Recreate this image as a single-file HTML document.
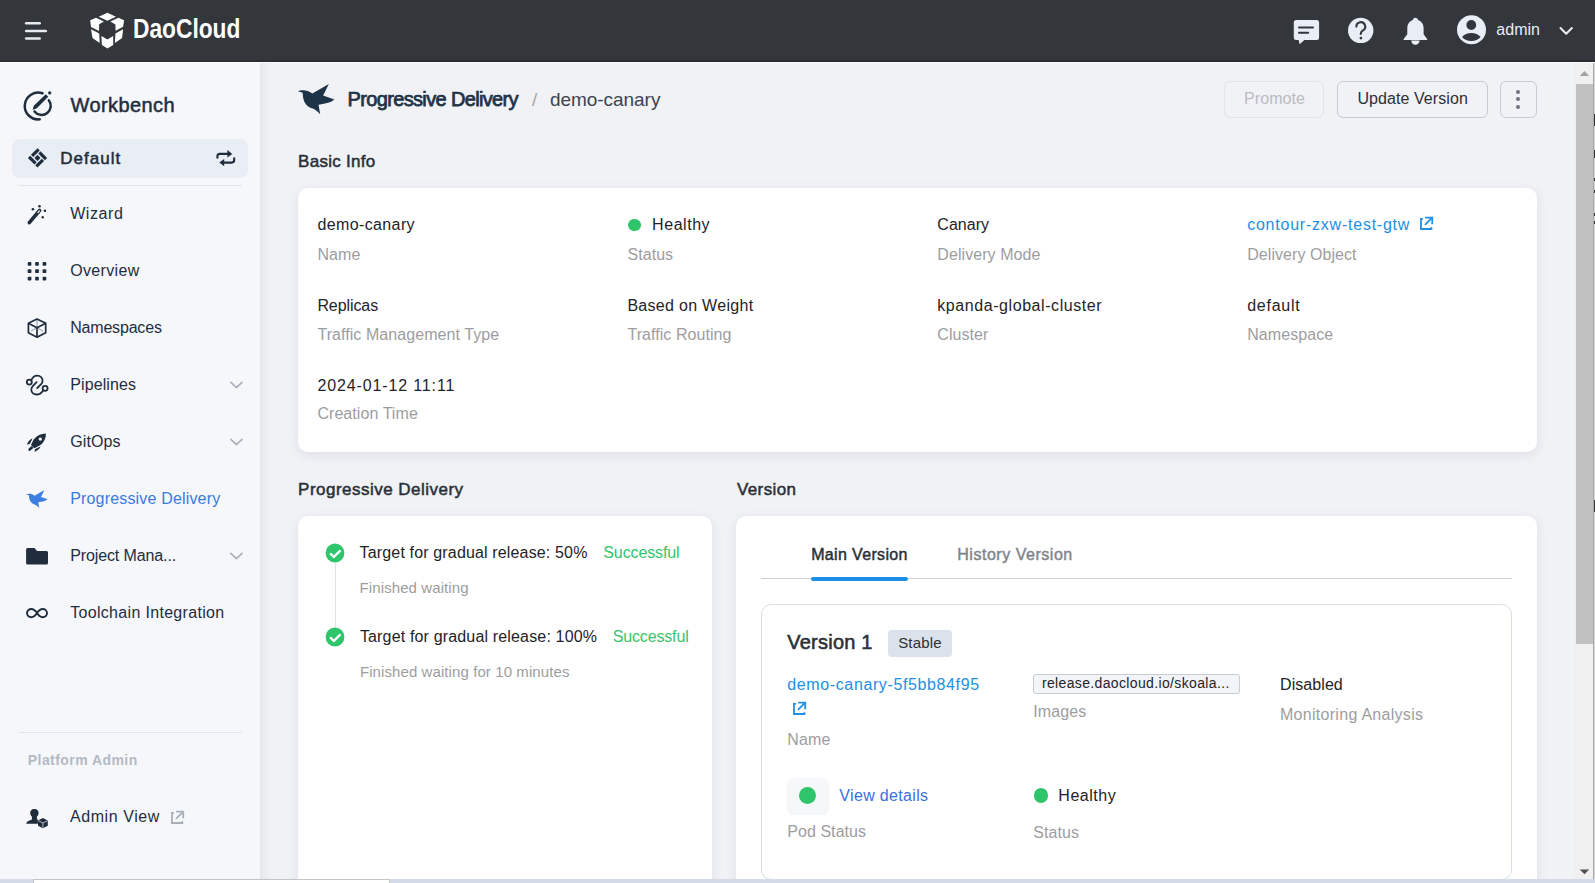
<!DOCTYPE html>
<html><head><meta charset="utf-8"><title>DaoCloud - Progressive Delivery</title>
<style>
html,body{margin:0;padding:0;}
body{width:1595px;height:883px;overflow:hidden;position:relative;background:#f1f2f6;font-family:"Liberation Sans",sans-serif;}
.t{position:absolute;white-space:nowrap;}
.b{position:absolute;}
svg.b{overflow:visible;}
</style></head><body>
<div class="b" style="left:0px;top:0px;width:1595px;height:62px;background:#33363b;"></div>
<div class="b" style="left:0px;top:60px;width:1595px;height:2px;background:linear-gradient(#2f3237,#25282c);"></div>
<div class="b" style="left:0px;top:62px;width:1595px;height:1px;background:#fdfdfe;"></div>
<div class="b" style="left:0px;top:63px;width:260px;height:820px;background:#f6f7fb;"></div>
<div class="b" style="left:260px;top:63px;width:1335px;height:820px;background:#f1f2f6;"></div>
<div class="b" style="left:260px;top:63px;width:12px;height:820px;background:linear-gradient(90deg,rgba(0,0,0,0.045),rgba(0,0,0,0));"></div>
<svg class="b" style="left:20px;top:15px;" width="32" height="32" viewBox="0 0 32 32"><g stroke="#e6ebf3" stroke-width="2.6" stroke-linecap="round"><line x1="6.2" y1="8.3" x2="19.7" y2="8.3"/><line x1="6.2" y1="16" x2="25.8" y2="16"/><line x1="6.2" y1="23.5" x2="19.7" y2="23.5"/></g></svg>
<svg class="b" style="left:86px;top:8px;" width="44" height="44" viewBox="0 0 44 44"><g fill="#ffffff"><polygon points="21.4,4.7 29.9,8.7 21.4,12.7 12.7,8.7"/><polygon points="4.2,12.2 10,9.7 17.9,13.5 13.2,16.2 13,22.9 5,18.9"/><polygon points="38.1,12.2 32.4,9.7 24.4,13.5 29.4,16.4 29.6,22.7 37.1,18.7"/><polygon points="5,21.2 13.2,25.4 13.7,34.9 6.5,29.9"/><polygon points="37.1,21.2 29.4,25.4 28.9,34.9 36.1,29.9"/><polygon points="15.4,27.9 21.4,31.6 27.2,27.9 27.2,36.9 21.4,40.6 15.9,37.1"/></g></svg>
<div class="t" style="left:132.60px;top:15.52px;font-size:27px;line-height:27px;color:#ffffff;font-weight:bold;transform:scaleX(0.8424);transform-origin:0.00px 0;">DaoCloud</div>
<svg class="b" style="left:1288px;top:14px;" width="36" height="36" viewBox="0 0 36 36"><path fill="#e8edf6" d="M8.3,6.1 H28.6 A2.5,2.5 0 0 1 31.1,8.6 V23.5 A2.5,2.5 0 0 1 28.6,26 H16.4 L11.6,30.2 L10.6,26 H8.3 A2.5,2.5 0 0 1 5.8,23.5 V8.6 A2.5,2.5 0 0 1 8.3,6.1 Z"/><g stroke="#33363b" stroke-width="2" stroke-linecap="round"><line x1="11" y1="13.6" x2="25" y2="13.6"/><line x1="11" y1="18.7" x2="20.2" y2="18.7"/></g></svg>
<svg class="b" style="left:1344px;top:14px;" width="34" height="34" viewBox="0 0 34 34"><circle cx="16.7" cy="16.4" r="12.7" fill="#e8edf6"/><path d="M12.4,12.6 a4.4,4.4 0 1 1 6.6,3.8 c-1.5,0.9 -2.3,1.7 -2.3,3.6" fill="none" stroke="#33363c" stroke-width="2.1" stroke-linecap="round"/><circle cx="16.9" cy="24.1" r="1.4" fill="#33363c"/></svg>
<svg class="b" style="left:1398px;top:14px;" width="34" height="34" viewBox="0 0 34 34"><path fill="#e8edf6" d="M17.4,3.8 c1.3,0 2.3,0.9 2.6,2.1 c3.4,1.1 5.6,4.2 5.6,8 v6.4 l3.5,4.6 c0.4,0.6 0,1.2 -0.6,1.2 h-22.2 c-0.7,0 -1,-0.7 -0.6,-1.2 l3.6,-4.6 v-6.4 c0,-3.8 2.3,-6.9 5.5,-8 c0.3,-1.2 1.3,-2.1 2.6,-2.1z"/><path fill="#e8edf6" d="M13.2,26.6 h8.4 a4.2,4.2 0 0 1 -8.4,0z"/></svg>
<svg class="b" style="left:1452px;top:10px;" width="40" height="40" viewBox="0 0 40 40"><circle cx="19.5" cy="19.8" r="14.5" fill="#e8edf6"/><circle cx="19.3" cy="15" r="4.9" fill="#33363c"/><path d="M10,27 c2.2,-2.8 5.5,-4.1 9.3,-4.1 c3.8,0 7.1,1.3 9.3,4.1 c-2.2,2.7 -5.5,4 -9.3,4 c-3.8,0 -7.1,-1.3 -9.3,-4z" fill="#33363c"/></svg>
<div class="t" style="left:1496.30px;top:21.52px;font-size:16px;line-height:16px;color:#e8edf6;letter-spacing:0.030px;">admin</div>
<svg class="b" style="left:1556px;top:24px;" width="20" height="14" viewBox="0 0 20 14"><path d="M4.5,4 L10.2,9.8 L15.9,4" fill="none" stroke="#e8edf6" stroke-width="2" stroke-linecap="round" stroke-linejoin="round"/></svg>
<svg class="b" style="left:18px;top:86px;" width="40" height="40" viewBox="0 0 40 40"><g fill="none" stroke="#1f2d3d" stroke-width="2.5" stroke-linecap="round"><path d="M24.5,7.3 A13.4,13.4 0 1 0 21.7,33.3"/><path d="M30.8,14.2 A8.8,8.8 0 1 1 16.5,25.4"/></g><path d="M14.6,23.8 L15.8,19.8 L27.8,8.3 L30.2,10.7 L18.6,22.4 Z" fill="#1f2d3d"/><circle cx="31.7" cy="6.9" r="1.6" fill="#1f2d3d"/></svg>
<div class="t" style="left:70.60px;top:95.02px;font-size:20px;line-height:20px;color:#1f2d3d;-webkit-text-stroke:0.5px #1f2d3d;letter-spacing:0.401px;">Workbench</div>
<div class="b" style="left:12px;top:139px;width:236px;height:39px;background:#e9eef5;border-radius:8px;"></div>
<svg class="b" style="left:22px;top:143px;" width="30" height="30" viewBox="0 0 30 30"><g transform="rotate(45 15.5 14.9)" fill="#1f2d3d"><rect x="8.70" y="8.10" width="3.20" height="9.30"/><rect x="13.00" y="8.10" width="9.30" height="3.20"/><rect x="19.10" y="12.40" width="3.20" height="9.30"/><rect x="8.70" y="18.50" width="9.30" height="3.20"/><rect x="13.30" y="12.70" width="4.40" height="4.40"/></g></svg>
<div class="t" style="left:60.30px;top:150.02px;font-size:17px;line-height:17px;color:#1f2d3d;-webkit-text-stroke:0.5px #1f2d3d;letter-spacing:1.023px;">Default</div>
<svg class="b" style="left:210px;top:143px;" width="30" height="30" viewBox="0 0 30 30"><g fill="none" stroke="#1f2d3d" stroke-width="2.1" stroke-linecap="round"><path d="M7.4,14.8 v-1.4 a2.5,2.5 0 0 1 2.5,-2.5 h10"/><path d="M24.2,15.3 v1.8 a2.5,2.5 0 0 1 -2.5,2.5 h-10"/></g><path d="M17.4,7 L22.3,10.9 L17.4,14.6 Z" fill="#1f2d3d"/><path d="M14.2,15.9 L9.3,19.6 L14.2,23.3 Z" fill="#1f2d3d"/></svg>
<div class="b" style="left:19px;top:185px;width:223px;height:1px;background:#e1e4ea;"></div>
<svg class="b" style="left:22px;top:200px;" width="30" height="30" viewBox="0 0 30 30"><line x1="7.3" y1="22.6" x2="16.3" y2="12" stroke="#1f2d3d" stroke-width="3.6" stroke-linecap="round"/><line x1="16.6" y1="11.6" x2="17.6" y2="10.5" stroke="#1f2d3d" stroke-width="3.6" stroke-linecap="round"/><line x1="15.9" y1="12.6" x2="17.4" y2="10.9" stroke="#f6f7fb" stroke-width="1.3" stroke-linecap="round"/><g fill="#1f2d3d"><circle cx="10.9" cy="9.2" r="1.3"/><circle cx="17.5" cy="6.3" r="1.3"/><circle cx="22.9" cy="10.7" r="1.3"/><circle cx="20.7" cy="17.3" r="1.2"/></g></svg>
<svg class="b" style="left:0;top:0" width="60" height="300" viewBox="0 0 60 300"><g fill="#1f2d3d"><rect x="27.70" y="262.00" width="3.7" height="3.7" rx="0.9"/><rect x="27.70" y="269.35" width="3.7" height="3.7" rx="0.9"/><rect x="27.70" y="276.70" width="3.7" height="3.7" rx="0.9"/><rect x="35.15" y="262.00" width="3.7" height="3.7" rx="0.9"/><rect x="35.15" y="269.35" width="3.7" height="3.7" rx="0.9"/><rect x="35.15" y="276.70" width="3.7" height="3.7" rx="0.9"/><rect x="42.60" y="262.00" width="3.7" height="3.7" rx="0.9"/><rect x="42.60" y="269.35" width="3.7" height="3.7" rx="0.9"/><rect x="42.60" y="276.70" width="3.7" height="3.7" rx="0.9"/></g></svg>
<svg class="b" style="left:22px;top:313px;" width="30" height="30" viewBox="0 0 30 30"><g fill="none" stroke="#1f2d3d" stroke-width="1.7" stroke-linejoin="round"><path d="M15,5.9 L23.7,10.3 V19.7 L15,24.2 L6.4,19.7 V10.3 Z"/><path d="M6.4,10.3 L15,14.8 L23.7,10.3 M15,14.8 V24.2"/></g><g stroke="#1f2d3d" stroke-width="0.8" opacity="0.6"><path d="M15,6.5 V14.5 M15,14.8 L9,18 M15,14.8 L21,18"/></g></svg>
<svg class="b" style="left:22px;top:370px;" width="30" height="30" viewBox="0 0 30 30"><g fill="none" stroke="#1f2d3d" stroke-width="1.8" stroke-linecap="round"><circle cx="7.3" cy="12.1" r="2.5"/><circle cx="23.1" cy="18.3" r="2.5"/><path d="M9.3,10.2 C10.5,7.2 12.6,5.6 15.3,5.6 C18.4,5.6 20.6,8 20.6,10.7 C20.6,12.3 19.9,13.4 18.9,14.4 L15.3,18"/><path d="M14.6,12.2 L11,15.8 C10,16.8 9.3,18 9.3,19.6 C9.3,22.4 11.6,24.5 14.6,24.5 C17,24.5 19.4,23.1 21.2,20.4"/></g></svg>
<svg class="b" style="left:22px;top:427px;" width="30" height="30" viewBox="0 0 30 30"><path fill="#1f2d3d" d="M23.9,6.4 C24,11.2 21.8,15.6 17.6,18.6 L12.4,21.2 L9,17.9 L11.6,12.6 C14.6,8.5 19,6.4 23.9,6.4 Z"/><circle cx="18.3" cy="12.1" r="1.7" fill="#f6f7fb"/><path fill="#1f2d3d" d="M10.4,11.3 C8.2,12.2 6.2,14.4 4.9,17.4 L7.7,17 L9.6,13.6 Z M18.6,19.5 C17.6,21.8 15.5,23.6 12.6,25 L13,22.3 L16.2,20.4 Z"/><path d="M9.9,20.6 L7.6,22.6" stroke="#1f2d3d" stroke-width="2.6" stroke-linecap="round"/></svg>
<svg class="b" style="left:22px;top:484px;" width="30" height="30" viewBox="0 0 30 30"><path fill="#3d7fe0" d="M4.1,10.4 C6,9.6 9.5,9.3 12.6,11.7 L22.4,6.1 L19,12.9 L25.7,15.3 C23.5,17 21,17.8 16.3,18.3 L17.3,24.1 C16,22.5 14.8,21.5 12.5,20.5 C9.5,19.4 7.6,17.5 7.1,13.6 L6.9,11.2 Z"/></svg>
<svg class="b" style="left:22px;top:540px;" width="30" height="30" viewBox="0 0 30 30"><path fill="#1f2d3d" d="M5.6,8 h6.9 l2.5,3 h9.5 a1.5,1.5 0 0 1 1.5,1.5 v10.5 a1.5,1.5 0 0 1 -1.5,1.5 h-18.9 a1.5,1.5 0 0 1 -1.5,-1.5 v-13.5 a1.5,1.5 0 0 1 1.5,-1.5z"/></svg>
<svg class="b" style="left:22px;top:598px;" width="30" height="30" viewBox="0 0 30 30"><path fill="none" stroke="#1f2d3d" stroke-width="1.9" d="M15,15.1 C13.3,12.4 11.4,11 9.3,11 C6.9,11 5,12.8 5,15.1 C5,17.4 6.9,19.2 9.3,19.2 C11.4,19.2 13.3,17.8 15,15.1 C16.7,12.4 18.6,11 20.7,11 C23.1,11 25,12.8 25,15.1 C25,17.4 23.1,19.2 20.7,19.2 C18.6,19.2 16.7,17.8 15,15.1 Z"/></svg>
<svg class="b" style="left:226px;top:378px;" width="20" height="14" viewBox="0 0 20 14"><path d="M4.8,4.3 L10.4,9.6 L16,4.3" fill="none" stroke="#a9b0bb" stroke-width="1.6" stroke-linecap="round" stroke-linejoin="round"/></svg>
<svg class="b" style="left:226px;top:435px;" width="20" height="14" viewBox="0 0 20 14"><path d="M4.8,4.3 L10.4,9.6 L16,4.3" fill="none" stroke="#a9b0bb" stroke-width="1.6" stroke-linecap="round" stroke-linejoin="round"/></svg>
<svg class="b" style="left:226px;top:549px;" width="20" height="14" viewBox="0 0 20 14"><path d="M4.8,4.3 L10.4,9.6 L16,4.3" fill="none" stroke="#a9b0bb" stroke-width="1.6" stroke-linecap="round" stroke-linejoin="round"/></svg>
<div class="t" style="left:70.20px;top:205.52px;font-size:16px;line-height:16px;color:#1f2d3d;letter-spacing:0.584px;">Wizard</div>
<div class="t" style="left:70.20px;top:262.52px;font-size:16px;line-height:16px;color:#1f2d3d;letter-spacing:0.331px;">Overview</div>
<div class="t" style="left:70.20px;top:319.52px;font-size:16px;line-height:16px;color:#1f2d3d;letter-spacing:-0.186px;">Namespaces</div>
<div class="t" style="left:70.20px;top:376.52px;font-size:16px;line-height:16px;color:#1f2d3d;letter-spacing:0.121px;">Pipelines</div>
<div class="t" style="left:70.20px;top:433.52px;font-size:16px;line-height:16px;color:#1f2d3d;letter-spacing:0.102px;">GitOps</div>
<div class="t" style="left:70.20px;top:490.52px;font-size:16px;line-height:16px;color:#3a7be0;letter-spacing:0.173px;">Progressive Delivery</div>
<div class="t" style="left:70.20px;top:547.52px;font-size:16px;line-height:16px;color:#1f2d3d;letter-spacing:-0.114px;">Project Mana...</div>
<div class="t" style="left:70.20px;top:604.52px;font-size:16px;line-height:16px;color:#1f2d3d;letter-spacing:0.317px;">Toolchain Integration</div>
<div class="b" style="left:19px;top:732px;width:223px;height:1px;background:#e1e4ea;"></div>
<div class="t" style="left:27.80px;top:753.02px;font-size:14px;line-height:14px;color:#b3bac4;font-weight:bold;letter-spacing:0.438px;">Platform Admin</div>
<svg class="b" style="left:22px;top:802px;" width="30" height="30" viewBox="0 0 30 30"><path fill="#1f2d3d" d="M12.9,7.1 c2.1,0 3.7,1.7 3.7,3.9 c0,1.6 -0.7,2.8 -1.7,3.5 v2.6 l1,0.6 v4 h-11.8 c0.3,-1.6 1.8,-3 4.6,-3.8 l1.2,-0.5 v-2.9 c-1,-0.7 -1.7,-1.9 -1.7,-3.5 c0,-2.2 1.6,-3.9 3.7,-3.9z"/><path fill="#1f2d3d" d="M20.9,16 l4.9,2.5 v5.3 l-4.9,2.4 l-4.9,-2.4 v-5.3z"/><path d="M16.3,18.7 L20.9,21 L25.5,18.7 M20.9,21 V25.8" stroke="#f6f7fb" stroke-width="0.7" fill="none"/></svg>
<div class="t" style="left:69.90px;top:808.52px;font-size:16px;line-height:16px;color:#1f2d3d;letter-spacing:0.590px;">Admin View</div>
<svg class="b" style="left:171px;top:811px;" width="15" height="15" viewBox="0 0 15 15"><g fill="none" stroke="#a9b0ba" stroke-width="1.8" stroke-linecap="butt"><path d="M2.92,1.95 H0.97 V12.02 H11.38 V10.18"/><path d="M4.98,7.80 L12.13,0.65"/><path d="M5.20,0.65 H12.24 V7.37"/></g></svg>
<svg class="b" style="left:296px;top:82px;" width="40" height="36" viewBox="0 0 40 36"><g transform="translate(-5,-8.3) scale(1.69)"><path fill="#1f3347" d="M4.1,10.4 C6,9.6 9.5,9.3 12.6,11.7 L22.4,6.1 L19,12.9 L25.7,15.3 C23.5,17 21,17.8 16.3,18.3 L17.3,24.1 C16,22.5 14.8,21.5 12.5,20.5 C9.5,19.4 7.6,17.5 7.1,13.6 L6.9,11.2 Z"/></g></svg>
<div class="t" style="left:347.50px;top:89.02px;font-size:20px;line-height:20px;color:#1f3347;-webkit-text-stroke:0.75px #1f3347;letter-spacing:-0.647px;">Progressive Delivery</div>
<div class="t" style="left:532.00px;top:90.02px;font-size:19px;line-height:19px;color:#a3a7ad;">/</div>
<div class="t" style="left:549.90px;top:90.02px;font-size:19px;line-height:19px;color:#3b4350;letter-spacing:-0.039px;">demo-canary</div>
<div class="b" style="left:1224px;top:81px;width:100px;height:37px;box-sizing:border-box;border:1px solid #e2e4e9;border-radius:6px;"></div>
<div class="t" style="left:1244.00px;top:90.52px;font-size:16px;line-height:16px;color:#b8bcc3;letter-spacing:0.089px;">Promote</div>
<div class="b" style="left:1337px;top:81px;width:151px;height:37px;box-sizing:border-box;border:1px solid #c6cad3;border-radius:6px;"></div>
<div class="t" style="left:1357.40px;top:90.52px;font-size:16px;line-height:16px;color:#2b3038;letter-spacing:0.076px;">Update Version</div>
<div class="b" style="left:1500px;top:81px;width:37px;height:37px;box-sizing:border-box;border:1px solid #c6cad3;border-radius:6px;"></div>
<div class="b" style="left:1516.3px;top:89.5px;width:4px;height:4px;background:#6e7480;border-radius:50%;"></div>
<div class="b" style="left:1516.3px;top:97.3px;width:4px;height:4px;background:#6e7480;border-radius:50%;"></div>
<div class="b" style="left:1516.3px;top:105px;width:4px;height:4px;background:#6e7480;border-radius:50%;"></div>
<div class="t" style="left:298.10px;top:153.02px;font-size:17px;line-height:17px;color:#2a2f36;-webkit-text-stroke:0.5px #2a2f36;letter-spacing:0.261px;">Basic Info</div>
<div class="b" style="left:298px;top:188px;width:1239px;height:264px;background:#fff;border-radius:10px;box-shadow:0 3px 12px rgba(30,40,60,0.085);"></div>
<div class="t" style="left:317.40px;top:216.52px;font-size:16px;line-height:16px;color:#1f2329;letter-spacing:0.383px;">demo-canary</div>
<div class="t" style="left:317.40px;top:246.52px;font-size:16px;line-height:16px;color:#9d9d9f;letter-spacing:0.115px;">Name</div>
<div class="b" style="left:628.1px;top:218.8px;width:12.5px;height:12.5px;background:#2fc56b;border-radius:50%;"></div>
<div class="t" style="left:652.10px;top:216.52px;font-size:16px;line-height:16px;color:#1f2329;letter-spacing:0.542px;">Healthy</div>
<div class="t" style="left:627.40px;top:246.52px;font-size:16px;line-height:16px;color:#9d9d9f;letter-spacing:0.073px;">Status</div>
<div class="t" style="left:937.30px;top:216.52px;font-size:16px;line-height:16px;color:#1f2329;letter-spacing:0.044px;">Canary</div>
<div class="t" style="left:937.30px;top:246.52px;font-size:16px;line-height:16px;color:#9d9d9f;letter-spacing:0.069px;">Delivery Mode</div>
<div class="t" style="left:1247.20px;top:216.52px;font-size:16px;line-height:16px;color:#1e8fe3;letter-spacing:0.769px;">contour-zxw-test-gtw</div>
<div class="t" style="left:1247.20px;top:246.52px;font-size:16px;line-height:16px;color:#9d9d9f;letter-spacing:0.063px;">Delivery Object</div>
<div class="t" style="left:317.40px;top:297.52px;font-size:16px;line-height:16px;color:#1f2329;letter-spacing:-0.080px;">Replicas</div>
<div class="t" style="left:317.40px;top:326.52px;font-size:16px;line-height:16px;color:#9d9d9f;letter-spacing:0.066px;">Traffic Management Type</div>
<div class="t" style="left:627.40px;top:297.52px;font-size:16px;line-height:16px;color:#1f2329;letter-spacing:0.296px;">Based on Weight</div>
<div class="t" style="left:627.40px;top:326.52px;font-size:16px;line-height:16px;color:#9d9d9f;letter-spacing:0.060px;">Traffic Routing</div>
<div class="t" style="left:937.30px;top:297.52px;font-size:16px;line-height:16px;color:#1f2329;letter-spacing:0.566px;">kpanda-global-cluster</div>
<div class="t" style="left:937.30px;top:326.52px;font-size:16px;line-height:16px;color:#9d9d9f;letter-spacing:0.068px;">Cluster</div>
<div class="t" style="left:1247.20px;top:297.52px;font-size:16px;line-height:16px;color:#1f2329;letter-spacing:0.743px;">default</div>
<div class="t" style="left:1247.20px;top:326.52px;font-size:16px;line-height:16px;color:#9d9d9f;letter-spacing:0.086px;">Namespace</div>
<div class="t" style="left:317.40px;top:377.52px;font-size:16px;line-height:16px;color:#1f2329;letter-spacing:0.870px;">2024-01-12 11:11</div>
<div class="t" style="left:317.40px;top:405.52px;font-size:16px;line-height:16px;color:#9d9d9f;letter-spacing:0.067px;">Creation Time</div>
<svg class="b" style="left:1420px;top:217px;" width="15" height="15" viewBox="0 0 15 15"><g fill="none" stroke="#1e8fe3" stroke-width="1.8" stroke-linecap="butt"><path d="M2.92,1.95 H0.97 V12.02 H11.38 V10.18"/><path d="M4.98,7.80 L12.13,0.65"/><path d="M5.20,0.65 H12.24 V7.37"/></g></svg>
<div class="t" style="left:298.10px;top:481.02px;font-size:17px;line-height:17px;color:#2a2f36;-webkit-text-stroke:0.5px #2a2f36;letter-spacing:0.480px;">Progressive Delivery</div>
<div class="b" style="left:298px;top:516px;width:414px;height:420px;background:#fff;border-radius:10px;box-shadow:0 3px 12px rgba(30,40,60,0.085);"></div>
<div class="b" style="left:334.6px;top:563px;width:1.2px;height:64px;background:#dfe2e8;"></div>
<svg class="b" style="left:324.9px;top:543px;" width="20" height="20" viewBox="0 0 20 20"><circle cx="10" cy="10" r="9.4" fill="#2fc56b"/><path d="M5.1,10.3 L8.9,13.9 L15.5,7.4" fill="none" stroke="#fff" stroke-width="2.3"/></svg>
<div class="t" style="left:359.60px;top:544.52px;font-size:16px;line-height:16px;color:#1f2329;letter-spacing:0.152px;">Target for gradual release: 50%</div>
<div class="t" style="left:603.30px;top:544.52px;font-size:16px;line-height:16px;color:#35c46c;letter-spacing:-0.119px;">Successful</div>
<div class="t" style="left:359.60px;top:580.02px;font-size:15px;line-height:15px;color:#9d9d9f;letter-spacing:0.095px;">Finished waiting</div>
<svg class="b" style="left:324.9px;top:627.4px;" width="20" height="20" viewBox="0 0 20 20"><circle cx="10" cy="10" r="9.4" fill="#2fc56b"/><path d="M5.1,10.3 L8.9,13.9 L15.5,7.4" fill="none" stroke="#fff" stroke-width="2.3"/></svg>
<div class="t" style="left:359.90px;top:628.52px;font-size:16px;line-height:16px;color:#1f2329;letter-spacing:0.160px;">Target for gradual release: 100%</div>
<div class="t" style="left:612.70px;top:628.52px;font-size:16px;line-height:16px;color:#35c46c;letter-spacing:-0.152px;">Successful</div>
<div class="t" style="left:359.90px;top:664.02px;font-size:15px;line-height:15px;color:#9d9d9f;letter-spacing:0.091px;">Finished waiting for 10 minutes</div>
<div class="t" style="left:737.00px;top:481.02px;font-size:17px;line-height:17px;color:#2a2f36;-webkit-text-stroke:0.5px #2a2f36;letter-spacing:0.383px;">Version</div>
<div class="b" style="left:736px;top:516px;width:801px;height:420px;background:#fff;border-radius:10px;box-shadow:0 3px 12px rgba(30,40,60,0.085);"></div>
<div class="t" style="left:811.20px;top:546.52px;font-size:16px;line-height:16px;color:#2a2f36;-webkit-text-stroke:0.45px #2a2f36;letter-spacing:0.346px;">Main Version</div>
<div class="t" style="left:957.30px;top:546.52px;font-size:16px;line-height:16px;color:#7f848b;-webkit-text-stroke:0.45px #7f848b;letter-spacing:0.522px;">History Version</div>
<div class="b" style="left:761px;top:578px;width:751px;height:1px;background:#cdd1d8;"></div>
<div class="b" style="left:811px;top:577px;width:97px;height:4px;background:#1e8fe6;border-radius:2px;"></div>
<div class="b" style="left:761px;top:604px;width:751px;height:276px;box-sizing:border-box;border:1px solid #dadde5;border-radius:10px;"></div>
<div class="t" style="left:787.30px;top:632.02px;font-size:20px;line-height:20px;color:#2a2f36;-webkit-text-stroke:0.55px #2a2f36;letter-spacing:0.226px;">Version 1</div>
<div class="b" style="left:888.3px;top:630.1px;width:63.5px;height:26.5px;background:#dce2eb;border-radius:4px;"></div>
<div class="t" style="left:898.20px;top:635.02px;font-size:15px;line-height:15px;color:#2a2f36;letter-spacing:0.154px;">Stable</div>
<div class="t" style="left:787.30px;top:676.52px;font-size:16px;line-height:16px;color:#1e8fe3;letter-spacing:0.620px;">demo-canary-5f5bb84f95</div>
<svg class="b" style="left:793px;top:702px;" width="15" height="15" viewBox="0 0 15 15"><g fill="none" stroke="#1e8fe3" stroke-width="1.8" stroke-linecap="butt"><path d="M2.92,1.95 H0.97 V12.02 H11.38 V10.18"/><path d="M4.98,7.80 L12.13,0.65"/><path d="M5.20,0.65 H12.24 V7.37"/></g></svg>
<div class="t" style="left:787.30px;top:731.52px;font-size:16px;line-height:16px;color:#9d9d9f;letter-spacing:0.115px;">Name</div>
<div class="b" style="left:1033.3px;top:673.5px;width:206.4px;height:20.8px;box-sizing:border-box;background:#f3f4f7;border:1px solid #c8ccd4;border-radius:3px;"></div>
<div class="t" style="left:1041.90px;top:676.02px;font-size:14px;line-height:14px;color:#1f2329;letter-spacing:0.356px;">release.daocloud.io/skoala...</div>
<div class="t" style="left:1033.30px;top:703.52px;font-size:16px;line-height:16px;color:#9d9d9f;letter-spacing:0.085px;">Images</div>
<div class="t" style="left:1280.00px;top:676.52px;font-size:16px;line-height:16px;color:#1f2329;letter-spacing:0.072px;">Disabled</div>
<div class="t" style="left:1280.00px;top:706.52px;font-size:16px;line-height:16px;color:#9d9d9f;letter-spacing:0.286px;">Monitoring Analysis</div>
<div class="b" style="left:787.2px;top:778.2px;width:41.4px;height:36.7px;background:#f6f7f9;border-radius:6px;"></div>
<div class="b" style="left:799.4px;top:787px;width:17px;height:17px;background:#2fc56b;border-radius:50%;"></div>
<div class="t" style="left:839.30px;top:787.52px;font-size:16px;line-height:16px;color:#3b6fdd;letter-spacing:0.338px;">View details</div>
<div class="t" style="left:787.20px;top:823.52px;font-size:16px;line-height:16px;color:#9d9d9f;letter-spacing:0.070px;">Pod Status</div>
<div class="b" style="left:1033.5px;top:788.4px;width:14.6px;height:14.6px;background:#2fc56b;border-radius:50%;"></div>
<div class="t" style="left:1058.30px;top:787.52px;font-size:16px;line-height:16px;color:#1f2329;letter-spacing:0.542px;">Healthy</div>
<div class="t" style="left:1033.30px;top:824.52px;font-size:16px;line-height:16px;color:#9d9d9f;letter-spacing:0.073px;">Status</div>
<div class="b" style="left:1574px;top:63px;width:19px;height:816px;background:#f0f0f0;"></div>
<div class="b" style="left:1576px;top:84px;width:17px;height:560px;background:#c1c1c1;"></div>
<svg class="b" style="left:1574px;top:63px;" width="19" height="19" viewBox="0 0 19 19"><path d="M5.7,12.9 L10.5,8.1 L15.2,12.9Z" fill="#a3a3a3"/></svg>
<svg class="b" style="left:1574px;top:862px;" width="19" height="19" viewBox="0 0 19 19"><path d="M5.7,7.5 L10.5,12.3 L15.2,7.5Z" fill="#505050"/></svg>
<div class="b" style="left:1593px;top:63px;width:1px;height:816px;background:#a9a9a9;"></div>
<div class="b" style="left:1594px;top:63px;width:1px;height:816px;background:#d4d4d4;"></div>
<div class="b" style="left:1594px;top:114px;width:1px;height:12px;background:#333;"></div>
<div class="b" style="left:1594px;top:150px;width:1px;height:8px;background:#333;"></div>
<div class="b" style="left:1594px;top:178px;width:1px;height:3px;background:#333;"></div>
<div class="b" style="left:1594px;top:190px;width:1px;height:3px;background:#333;"></div>
<div class="b" style="left:1594px;top:213px;width:1px;height:3px;background:#333;"></div>
<div class="b" style="left:1594px;top:221px;width:1px;height:3px;background:#333;"></div>
<div class="b" style="left:1594px;top:500px;width:1px;height:12px;background:#333;"></div>
<div class="b" style="left:0px;top:879px;width:1595px;height:4px;background:#d3dce6;"></div>
<div class="b" style="left:33px;top:879px;width:357px;height:4px;background:#fff;border-top:1px solid #c4c4c4;border-left:1px solid #c4c4c4;border-right:1px solid #c4c4c4;box-sizing:border-box;"></div>
</body></html>
